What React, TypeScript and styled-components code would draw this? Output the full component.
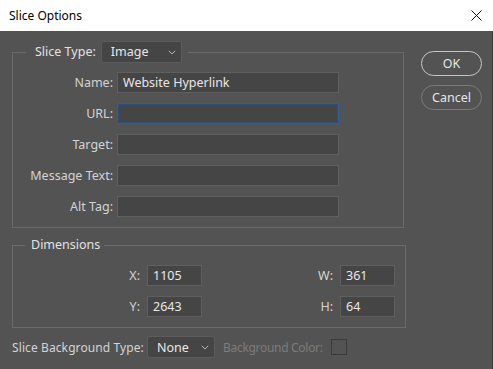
import styled, { createGlobalStyle } from "styled-components";

const GlobalStyle = createGlobalStyle`
  html, body {
    margin: 0;
    padding: 0;
    background: #535353;
  }
  body {
    font-family: "Noto Sans", "Open Sans", sans-serif;
  }
`;

const fields = [
  { label: "Name:", value: "Website Hyperlink" },
  { label: "URL:", value: "", focused: true },
  { label: "Target:", value: "" },
  { label: "Message Text:", value: "" },
  { label: "Alt Tag:", value: "" },
];

const dims = [
  { a: "X:", av: "1105", b: "W:", bv: "361" },
  { a: "Y:", av: "2643", b: "H:", bv: "64" },
];

const Chevron = () => (
  <svg width="8" height="5" viewBox="0 0 8 5">
    <path d="M0.8 0.8 L4 4 L7.2 0.8" fill="none" stroke="#b8b8b8" strokeWidth="1" />
  </svg>
);

const CloseIcon = () => (
  <svg width="11" height="11" viewBox="0 0 11 11">
    <path d="M0.5 0.5 L10.5 10.5 M10.5 0.5 L0.5 10.5" stroke="#111" strokeWidth="1" />
  </svg>
);

const App = () => {
  return (
    <Window>
      <GlobalStyle />
      <TitleBar>
        <Title>Slice Options</Title>
        <CloseButton>
          <CloseIcon />
        </CloseButton>
      </TitleBar>
      <Body>
        <Main>
          <Group $width={392} $pad={13}>
            <Legend $pad="0 6px 0 9px">
              <LegendLabel>Slice Type:</LegendLabel>
              <Select $width={81}>
                <span>Image</span>
                <Chevron />
              </Select>
            </Legend>
            <FieldGrid>
              {fields.map((f) => (
                <Row key={f.label}>
                  <Label>{f.label}</Label>
                  <TextBox $focused={!!f.focused}>{f.value}</TextBox>
                </Row>
              ))}
            </FieldGrid>
          </Group>
          <Group $width={394} $pad={12} $top={9}>
            <Legend $pad="0 4px 0 6px">Dimensions</Legend>
            <DimGrid>
              {dims.map((d) => (
                <DimRow key={d.a}>
                  <Label>{d.a}</Label>
                  <NumBox>{d.av}</NumBox>
                  <Label>{d.b}</Label>
                  <NumBox>{d.bv}</NumBox>
                </DimRow>
              ))}
            </DimGrid>
          </Group>
        </Main>
        <Side>
          <Button $primary>OK</Button>
          <Button>Cancel</Button>
        </Side>
        <BottomRow>
          <BottomLabel>Slice Background Type:</BottomLabel>
          <Select $width={68}>
            <span>None</span>
            <Chevron />
          </Select>
          <DisabledLabel>Background Color:</DisabledLabel>
          <Swatch />
        </BottomRow>
      </Body>
    </Window>
  );
};

export default App;

const Window = styled.div`
  width: 493px;
  height: 369px;
  display: flex;
  flex-direction: column;
  background: #535353;
  overflow: hidden;
  font-size: 12.5px;
  color: #d6d6d6;
`;

const TitleBar = styled.div`
  height: 31px;
  flex: none;
  background: #ffffff;
  display: flex;
  align-items: center;
  justify-content: space-between;
  padding: 0 10px 0 9px;
  box-sizing: border-box;
`;

const Title = styled.div`
  font-size: 12px;
  color: #000;
  padding-bottom: 1px;
`;

const CloseButton = styled.div`
  width: 12px;
  height: 12px;
  display: flex;
  align-items: center;
  justify-content: center;
  margin-right: 1px;
  padding-bottom: 1px;
`;

const Body = styled.div`
  flex: 1;
  display: grid;
  grid-template-columns: 409px 1fr;
  grid-template-rows: auto auto;
  align-content: start;
  padding: 10px 0 0 12px;
  border-right: 1px solid #3b3b3b;
`;

const Main = styled.div`
  display: flex;
  flex-direction: column;
`;

const Side = styled.div`
  display: flex;
  flex-direction: column;
  gap: 9px;
  padding-top: 10px;
`;

const Group = styled.fieldset<{ $width: number; $pad: number; $top?: number }>`
  width: ${(p) => p.$width}px;
  box-sizing: border-box;
  margin: ${(p) => p.$top ?? 0}px 0 0 0;
  padding: 0 0 10px ${(p) => p.$pad}px;
  border: 1px solid #6b6b6b;
  min-inline-size: 0;
`;

const Legend = styled.legend<{ $pad: string }>`
  display: flex;
  align-items: center;
  gap: 5px;
  padding: ${(p) => p.$pad};
  color: #e2e2e2;
  line-height: 16px;
`;

const LegendLabel = styled.span`
  color: #e2e2e2;
`;

const Select = styled.div<{ $width: number }>`
  width: ${(p) => p.$width}px;
  height: 22px;
  flex: none;
  box-sizing: border-box;
  display: flex;
  align-items: center;
  justify-content: space-between;
  padding: 0 5px 0 9px;
  background: #454545;
  border: 1px solid #5c5c5c;
  border-radius: 3px;
  color: #e8e8e8;
  font-size: 12.5px;
`;

const FieldGrid = styled.div`
  display: flex;
  flex-direction: column;
  gap: 10px;
  padding-top: 9px;
`;

const Row = styled.div`
  display: grid;
  grid-template-columns: 87px 222px;
  column-gap: 4px;
  align-items: center;
`;

const Label = styled.span`
  text-align: right;
  color: #d4d4d4;
  white-space: nowrap;
`;

const TextBox = styled.div<{ $focused: boolean }>`
  height: 21px;
  box-sizing: border-box;
  background: #454545;
  border: 1px solid ${(p) => (p.$focused ? "#2d5e9e" : "#5f5f5f")};
  box-shadow: ${(p) => (p.$focused ? "inset 0 0 0 1px #2a4f80" : "none")};
  padding: 0 5px;
  display: flex;
  align-items: center;
  color: #e8e8e8;
  font-size: 12.5px;
`;

const DimGrid = styled.div`
  display: flex;
  flex-direction: column;
  gap: 10px;
  padding-top: 12px;
`;

const DimRow = styled.div`
  display: grid;
  grid-template-columns: 115px 55px 124px 55px;
  column-gap: 7px;
  align-items: center;
`;

const NumBox = styled.div`
  height: 21px;
  box-sizing: border-box;
  background: #454545;
  border: 1px solid #5f5f5f;
  padding: 0 5px;
  display: flex;
  align-items: center;
  color: #e8e8e8;
  font-size: 12.5px;
`;

const Button = styled.div<{ $primary?: boolean }>`
  width: 61px;
  height: 25px;
  box-sizing: border-box;
  border-radius: 13px;
  border: ${(p) => (p.$primary ? "1.5px solid #c6c6c6" : "1px solid #7b7b7b")};
  display: flex;
  align-items: center;
  justify-content: center;
  color: #e6e6e6;
  font-size: 12.5px;
`;

const BottomRow = styled.div`
  grid-column: 1 / -1;
  display: flex;
  align-items: center;
  padding-top: 8px;
`;

const BottomLabel = styled.span`
  flex: none;
  width: 135px;
  color: #d4d4d4;
  font-size: 12px;
  letter-spacing: 0.1px;
  white-space: nowrap;
`;

const DisabledLabel = styled.span`
  flex: none;
  color: #7c7c7c;
  margin-left: 8px;
  width: 108px;
  font-size: 12px;
  letter-spacing: -0.3px;
  white-space: nowrap;
`;

const Swatch = styled.div`
  flex: none;
  width: 16px;
  height: 16px;
  box-sizing: border-box;
  border: 1px solid #3a3a3a;
`;
